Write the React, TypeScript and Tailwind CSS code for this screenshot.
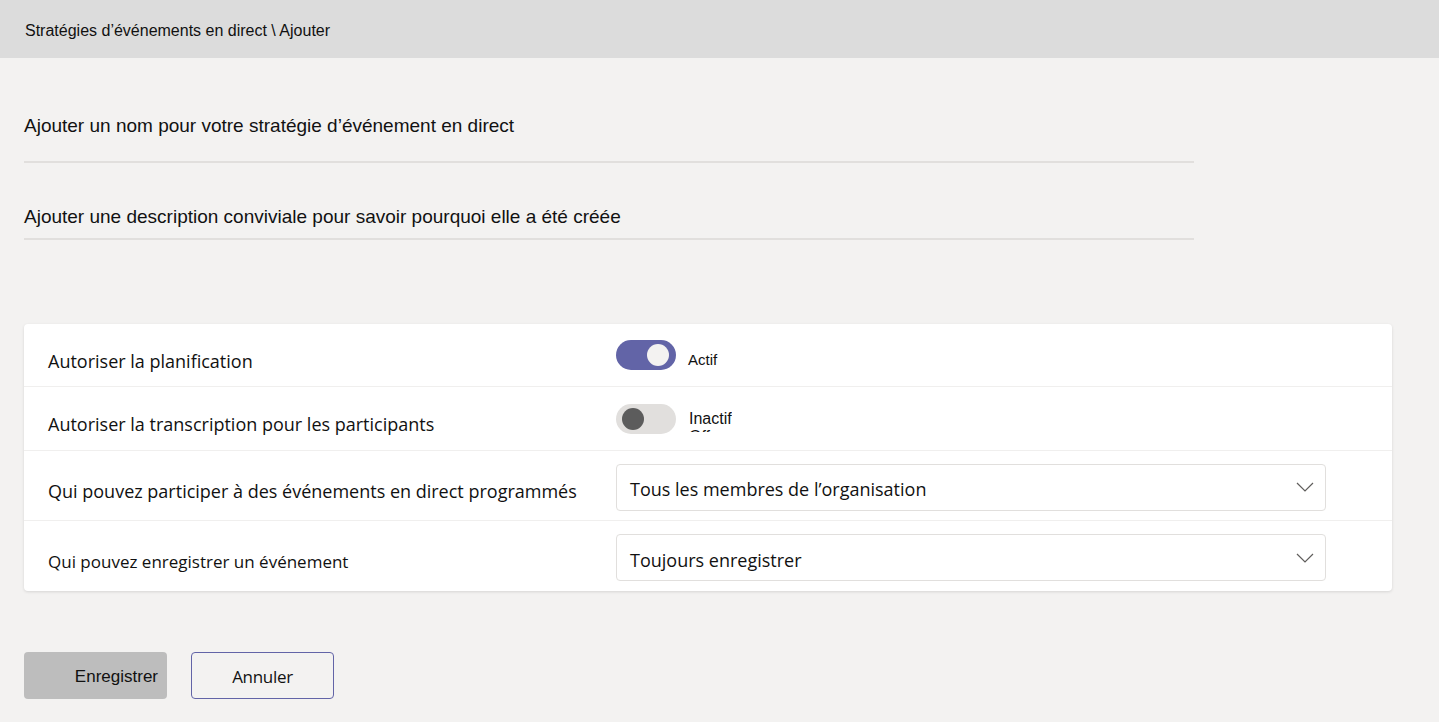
import { useState } from "react";

const Toggle = ({ on }: { on: boolean }) => (
  <div
    className={`relative w-[60px] h-[30px] rounded-full ${
      on ? "bg-[#6264a7]" : "bg-[#e1dfdd]"
    }`}
  >
    <div
      className={`absolute top-[4px] w-[22px] h-[22px] rounded-full ${
        on ? "left-[31px] bg-[#f3f2f1]" : "left-[6px] bg-[#5c5c5c]"
      }`}
    />
  </div>
);

const Chevron = () => (
  <svg width="18" height="10" viewBox="0 0 18 10" fill="none">
    <path d="M1 1l8 8 8-8" stroke="#605e5c" strokeWidth="1.2" />
  </svg>
);

const Select = ({ value }: { value: string }) => (
  <div className="mt-[3px] w-[710px] h-[47px] flex items-center justify-between pl-[13px] pr-[11px] border border-[#e1dfdd] rounded-[4px] bg-white">
    <span className="pt-[5px] text-[18px] text-[#111] font-['Open_Sans',sans-serif]">
      {value}
    </span>
    <Chevron />
  </div>
);

export default function App() {
  const [planif] = useState(true);
  const [transcr] = useState(false);

  return (
    <div className="min-h-[722px] bg-[#f3f2f1] font-['Liberation_Sans',Arial,sans-serif] text-[#111]">
      <header className="h-[58px] bg-[#dcdcdc] flex items-center px-[25px] pt-[3px] text-[16px]">
        Stratégies d’événements en direct \ Ajouter
      </header>

      <div className="px-[24px]">
        <div className="w-[1170px] pt-[56px] text-[19px] leading-[24px]">
          <div className="h-[49px] border-b-2 border-[#e1dfdd]">
            Ajouter un nom pour votre stratégie d’événement en direct
          </div>
          <div className="h-[77px] border-b-2 border-[#e1dfdd] pt-[42px]">
            Ajouter une description conviviale pour savoir pourquoi elle a été créée
          </div>
        </div>

        <div className="mt-[84px] w-[1368px] bg-white rounded-[4px] shadow-[0_1px_3px_rgba(0,0,0,0.12)] font-['Open_Sans',sans-serif] text-[18px]">
          <div className="h-[63px] flex items-center border-b border-[#f0efee]">
            <div className="w-[592px] pl-[24px] pt-[12px]">Autoriser la planification</div>
            <Toggle on={planif} />
            <span className="ml-[12px] mt-[10px] text-[15px] font-['Liberation_Sans',Arial,sans-serif]">
              Actif
            </span>
          </div>
          <div className="h-[64px] flex items-center border-b border-[#f0efee]">
            <div className="w-[592px] pl-[24px] pt-[12px]">
              Autoriser la transcription pour les participants
            </div>
            <Toggle on={transcr} />
            <div className="ml-[13px] mt-[4px] h-[22px] overflow-hidden text-[16px] font-['Liberation_Sans',Arial,sans-serif] leading-[18px]">
              <div>Inactif</div>
              <div>Off</div>
            </div>
          </div>
          <div className="h-[70px] flex items-center border-b border-[#f0efee]">
            <div className="w-[592px] pl-[24px] pt-[12px]">
              Qui pouvez participer à des événements en direct programmés
            </div>
            <Select value="Tous les membres de l’organisation" />
          </div>
          <div className="h-[70px] flex items-center">
            <div className="w-[592px] pl-[24px] pt-[12px] text-[17px]">
              Qui pouvez enregistrer un événement
            </div>
            <Select value="Toujours enregistrer" />
          </div>
        </div>

        <div className="mt-[61px] flex gap-[24px]">
          <button className="w-[143px] h-[47px] pt-[2px] bg-[#bdbdbd] rounded-[4px] text-[17px] text-right pr-[9px]">
            Enregistrer
          </button>
          <button className="w-[143px] h-[47px] pt-[2px] border border-[#6264a7] rounded-[4px] text-[17px] font-['Open_Sans',sans-serif] tracking-[-0.3px]">
            Annuler
          </button>
        </div>
      </div>
    </div>
  );
}
